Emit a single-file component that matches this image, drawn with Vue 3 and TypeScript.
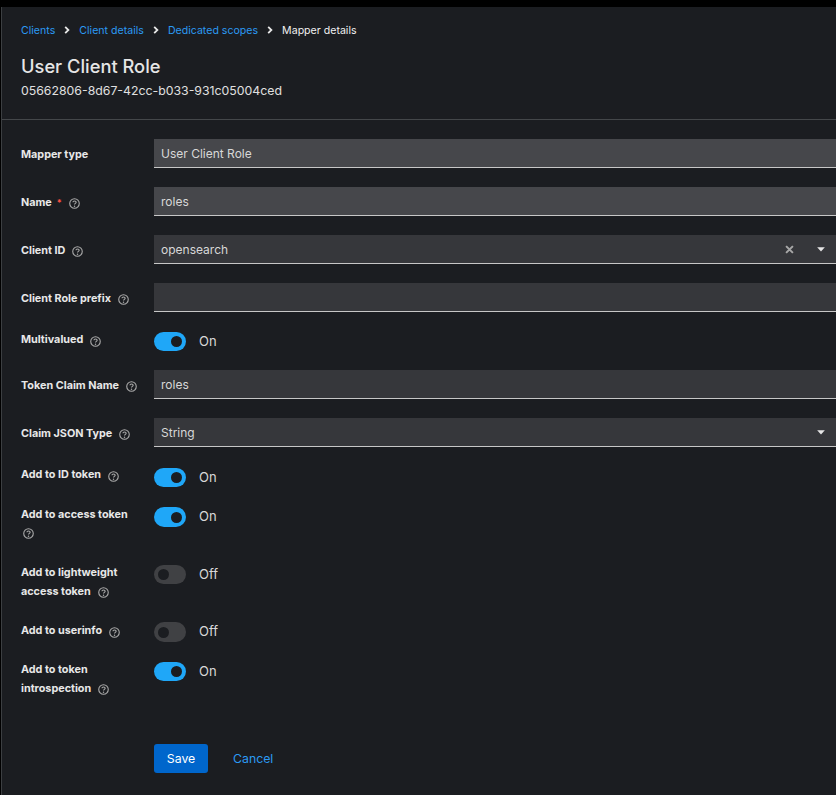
<script setup lang="ts">
interface Row {
  label: string
  tail?: string
  required?: boolean
  help?: boolean
  kind: 'input' | 'select' | 'toggle'
  value?: string
  on?: boolean
  readonly?: boolean
  clear?: boolean
  caret?: boolean
  cls?: string
}
const rows: Row[] = [
  { label: 'Mapper type', kind: 'input', value: 'User Client Role', readonly: true, help: false },
  { label: 'Name', required: true, help: true, kind: 'input', value: 'roles', readonly: true },
  { label: 'Client ID', help: true, kind: 'select', value: 'opensearch', clear: true, caret: true },
  { label: 'Client Role prefix', help: true, kind: 'input', value: '' },
  { label: 'Multivalued', help: true, kind: 'toggle', on: true },
  { label: 'Token Claim Name', help: true, kind: 'input', value: 'roles' },
  { label: 'Claim JSON Type', help: true, kind: 'select', value: 'String', caret: true },
  { label: 'Add to ID token', help: true, kind: 'toggle', on: true, cls: 'idrow' },
  { label: 'Add to access token', help: true, kind: 'toggle', on: true, cls: 'wrapicon' },
  { label: 'Add to lightweight', tail: 'access token', help: true, kind: 'toggle', on: false, cls: 'twoline' },
  { label: 'Add to userinfo', help: true, kind: 'toggle', on: false, cls: 'inforow' },
  { label: 'Add to token', tail: 'introspection', help: true, kind: 'toggle', on: true, cls: 'twoline' },
]
const crumbs = ['Clients', 'Client details', 'Dedicated scopes']
</script>

<template>
  <div class="page">
    <header class="head">
      <nav class="crumbs">
        <template v-for="c in crumbs" :key="c">
          <a class="link">{{ c }}</a>
          <svg class="chev" viewBox="0 0 8 10" width="8" height="10"><path d="M2.2 1.8 L5.4 5 L2.2 8.2" fill="none" stroke="#e8e8e8" stroke-width="1.8" /></svg>
        </template>
        <span class="current">Mapper details</span>
      </nav>
      <h1 class="title">User Client Role</h1>
      <p class="uuid">05662806-8d67-42cc-b033-931c05004ced</p>
    </header>
    <form class="form" @submit.prevent>
      <div v-for="r in rows" :key="r.label" class="row" :class="[r.kind, r.cls]">
        <div class="label">
          <template v-if="r.tail">{{ r.label }}<br /></template>
          <span class="lastline">
            <span>{{ r.tail || r.label }}</span>
            <span v-if="r.required" class="req">*</span>
            <svg v-if="r.help" class="help" viewBox="0 0 12 12" width="11" height="11">
              <circle cx="6" cy="6" r="5.2" fill="none" stroke="#a9a9a9" stroke-width="1.2" />
              <path d="M4.3 4.7 C4.3 2.9 7.8 2.9 7.8 4.7 C7.8 5.9 6 5.8 6 7.2" fill="none" stroke="#a9a9a9" stroke-width="1.2" />
              <circle cx="6" cy="9" r=".8" fill="#a9a9a9" />
            </svg>
          </span>
        </div>
        <div v-if="r.kind === 'toggle'" class="switch">
          <span class="track" :class="{ on: r.on }"><span class="knob"></span></span>
          <span class="state">{{ r.on ? 'On' : 'Off' }}</span>
        </div>
        <div v-else class="field" :class="{ ro: r.readonly }">
          <span class="val">{{ r.value }}</span>
          <svg v-if="r.clear" class="x" viewBox="0 0 10 10" width="9" height="9"><path d="M1.2 1.2 L8.8 8.8 M8.8 1.2 L1.2 8.8" stroke="#a8a8a8" stroke-width="2.2" /></svg>
          <svg v-if="r.caret" class="caret" viewBox="0 0 10 6" width="8" height="5"><path d="M.2 .3 H9.8 L5 5.6 Z" fill="#e6e6e6" /></svg>
        </div>
      </div>
      <div class="actions">
        <button class="save" type="button">Save</button>
        <a class="cancel">Cancel</a>
      </div>
    </form>
  </div>
</template>

<style scoped>
.page {
  width: 835px;
  height: 788px;
  margin-top: 7px;
  margin-left: 1px;
  background: #1b1d21;
  border-left: 1px solid #3c3f42;
  box-sizing: border-box;
  overflow: hidden;
  font-family: "Inter", "Liberation Sans", sans-serif;
  color: #e0e0e0;
}
.head {
  height: 113px;
  box-sizing: border-box;
  padding: 15px 0 0 19px;
  border-bottom: 1px solid #44474a;
}
.crumbs {
  display: flex;
  align-items: center;
  height: 16px;
  font-size: 10.6px;
}
.link { color: #2b9af3; }
.chev { margin: 0 8px; }
.current { color: #f0f0f0; }
.title {
  margin: 15px 0 0;
  font-size: 18.3px;
  line-height: 26px;
  font-weight: 500;
  color: #e6e6e6;
}
.uuid {
  margin: 2px 0 0;
  font-size: 12.3px;
  line-height: 19px;
  color: #e0e0e0;
}
.form {
  padding: 19px 0 0 19px;
}
.row {
  display: flex;
  align-items: flex-start;
  margin-bottom: 19px;
}
.label {
  width: 133px;
  flex: none;
  font-size: 10.8px;
  line-height: 19.5px;
  font-weight: 700;
  color: #e8e8e8;
  padding-top: 6px;
}
.row.toggle .label { padding-top: 0; position: relative; top: -1px; }
.row.toggle { min-height: 20px; }
.row.wrapicon, .row.twoline { height: 39px; }
.wrapicon .lastline { display: block; }
.wrapicon .lastline span { display: block; }
.wrapicon .help { display: block; margin: 3px 0 0 2px; }
.lastline { display: inline-flex; align-items: center; }
.twoline .lastline { position: relative; top: -1px; }
.req { color: #fe5142; margin-left: 5px; font-size: 9px; position: relative; top: 0; }
.help { margin-left: 7px; position: relative; top: 1px; }
.row.toggle .help { top: 2px; }
.row.wrapicon .help { top: 0; }
.row.twoline .help { top: 1px; }
.field {
  flex: 1;
  height: 29px;
  box-sizing: border-box;
  display: flex;
  align-items: center;
  padding: 0 12px 0 7px;
  background: #36373b;
  border-bottom: 1px solid #c7c7c7;
  font-size: 12px;
  color: #d8d8d8;
}
.field.ro { background: #46474b; }
.val { flex: 1; }
.x { margin-right: 23.5px; }
.caret { margin-right: -1px; }
.switch {
  display: flex;
  align-items: flex-start;
  padding-top: 1px;
}
.idrow .switch { padding-top: 2px; }
.inforow .switch { padding-top: 0; }
.inforow .track { height: 20px; }
.wrapicon .track { height: 20px; }
.track {
  width: 32px;
  height: 19px;
  border-radius: 10px;
  background: #404144;
  display: flex;
  align-items: center;
  padding: 0 4px;
  box-sizing: border-box;
}
.track.on { background: #1fa7f8; justify-content: flex-end; }
.knob {
  width: 11px;
  height: 11px;
  border-radius: 50%;
  background: #1b1d21;
}
.state { margin-left: 13px; font-size: 13px; line-height: 19px; color: #d8d8d8; }
.actions {
  display: flex;
  align-items: center;
  margin: 44px 0 0 133px;
}
.save {
  width: 54px;
  height: 29px;
  border: 0;
  border-radius: 3px;
  background: #0066cc;
  color: #fff;
  font: 12.3px "Inter", "Liberation Sans", sans-serif;
}
.cancel { margin-left: 25px; color: #2b9af3; font-size: 12.3px; }
</style>

<style>
html, body { background: #000; margin: 0; }
</style>
